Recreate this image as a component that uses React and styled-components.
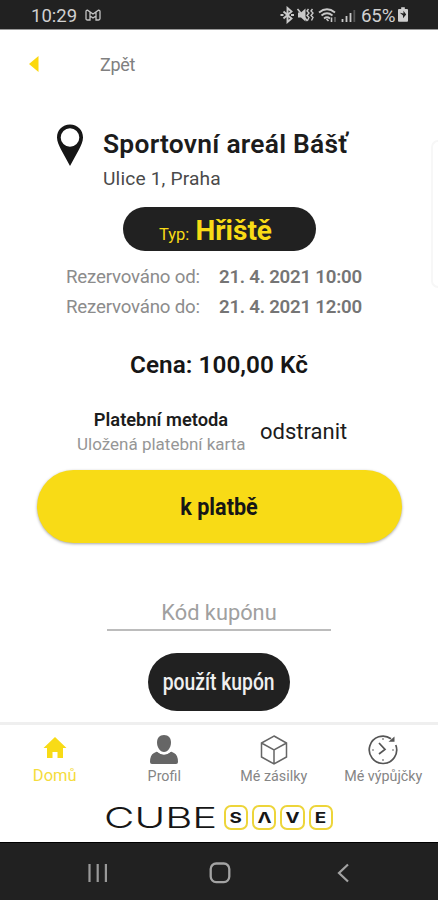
import React from 'react'
import styled, { createGlobalStyle } from 'styled-components'

function StatusIcons() {
  return (
    <svg width="76" height="18" viewBox="0 0 76 18" fill="none" stroke="#c9c9c9">
      <path d="M3.500 5.500l8 7-4 3.500V2l4 3.500-8 7" strokeWidth="1.900" />
      <path d="M0.500 9h3M11 9h3" strokeWidth="1.900" />
      <path d="M18 6.500h3l4.500-4v13l-4.500-4h-3z" fill="#c9c9c9" stroke="none" />
      <path d="M17.500 3l10 12" strokeWidth="1.600" />
      <path d="M28.500 3l-1.500 2 2 2-2 2.500 2 2-1.500 3M32.500 3l-1.500 2 2 2-2 2.500 2 2-1.500 3" strokeWidth="1.400" />
      <path d="M39 6.500q8-6.500 16 0M41.500 9.500q5.500-4.500 11 0M44 12.500q3-2.500 6 0" strokeWidth="1.800" />
      <path d="M46.500 13l2 2M51.500 11.500v4.500" strokeWidth="1.600" />
      <path d="M55 11v5" stroke="#777" strokeWidth="1.300" />
      <path d="M62.500 16v-3M66.500 16v-6M70.500 16V7" strokeWidth="1.800" />
      <path d="M74.300 16V4" stroke="#555" strokeWidth="1.800" />
    </svg>
  )
}

function StatusBar() {
  return (
    <StatusContainer>
      <Clock>10:29</Clock>
      <svg width="16" height="12" viewBox="0 0 16 12" fill="none" stroke="#c4c4c4" strokeWidth="1.3">
        <path d="M1 2.500Q1 1 2.500 1.200L8 5l5.500-3.800Q15 1 15 2.500v7q0 1.500-1.500 1.500H11V7L8 9 5 7v4H2.500Q1 11 1 9.500zM5 3v4M11 3v4" />
      </svg>
      <StatusRight>
        <StatusIcons />
        <Percent>65%</Percent>
        <svg width="10" height="15" viewBox="0 0 11 16">
          <path d="M3.500 0h4v2H10q1 0 1 1v12q0 1-1 1H1q-1 0-1-1V3q0-1 1-1h2.500z" fill="#cfcfcf" />
          <path d="M2 6l4 1V4l3 4-3.500 4V9z" fill="#212121" />
        </svg>
      </StatusRight>
    </StatusContainer>
  )
}

function Place() {
  return (
    <PlaceContainer>
      <svg width="28" height="43" viewBox="0 0 28 43">
        <path fillRule="evenodd" d="M14 0.500C6.500 0.500 1 6 1 13.500c0 4 2 8 4 12L14 42l9-16.500c2-4 4-8 4-12C27 6 21.500 0.500 14 0.500zm0 3.700a9.300 9.300 0 1 1 0 18.600A9.300 9.300 0 0 1 14 4.200z" fill="#161616" />
      </svg>
      <div>
        <PlaceName>Sportovní areál Bášť</PlaceName>
        <Address>Ulice 1, Praha</Address>
      </div>
    </PlaceContainer>
  )
}

function Reservation({ label, value }) {
  return (
    <ReservationRow>
      <ReservationLabel>{label}</ReservationLabel>
      <ReservationValue>{value}</ReservationValue>
    </ReservationRow>
  )
}

function HomeIcon() {
  return (
    <svg width="30" height="30" viewBox="0 0 30 30">
      <path d="M15 2L3.500 13H7v10h5.500v-6h5v6H23V13h3.500z" fill="#f8db16" />
    </svg>
  )
}

function ProfileIcon() {
  return (
    <svg width="30" height="30" viewBox="0 0 30 30" fill="#666">
      <path d="M15 0c4.500 0 7 3 7 7.500S19 17 15 17 8 12 8 7.500 10.500 0 15 0z" />
      <path d="M8 16.500q7 6 14 0l3 1.500q4 2 4 9 0 2-2 2H3q-2 0-2-2 0-7 4-9z" />
      <path d="M7.700 15.800q7.300 6 14.600 0" fill="none" stroke="#fff" strokeWidth="1.200" />
    </svg>
  )
}

function BoxIcon() {
  return (
    <svg width="30" height="30" viewBox="0 0 30 30" fill="none" stroke="#666" strokeWidth="1.500">
      <path d="M15 1l12.500 7v14L15 29 2.500 22V8zM2.500 8L15 15l12.500-7M15 15v14" />
    </svg>
  )
}

function HistoryIcon() {
  return (
    <svg width="30" height="30" viewBox="0 0 30 30" fill="none" stroke="#555" strokeWidth="1.700">
      <path d="M23 3.700A13.700 13.700 0 1 0 27.800 10" />
      <path d="M20.500 6.800h6V1.500z" fill="#555" stroke="none" />
      <path d="M11 8l6 6.500-6 4.500" strokeWidth="1.700" />
      <path d="M15 3v2M15 24v2M4 15h2M24 15h2" stroke="#999" />
    </svg>
  )
}

const tabs = [
  { name: 'Domů', icon: HomeIcon, active: true },
  { name: 'Profil', icon: ProfileIcon },
  { name: 'Mé zásilky', icon: BoxIcon },
  { name: 'Mé výpůjčky', icon: HistoryIcon },
]

function Tabs() {
  return (
    <TabsContainer>
      {tabs.map(({ name, icon: Icon, active }) => (
        <Tab key={name}>
          <Icon />
          <TabName $active={active}>{name}</TabName>
        </Tab>
      ))}
    </TabsContainer>
  )
}

function Logo() {
  return (
    <LogoContainer>
      <LogoName>CUBE</LogoName>
      <Tiles>
        {['S', 'Λ', 'V', 'E'].map((letter) => (
          <Tile key={letter}>
            <TileLetter>{letter}</TileLetter>
          </Tile>
        ))}
      </Tiles>
    </LogoContainer>
  )
}

function SystemBar() {
  return (
    <SystemContainer>
      <svg width="20" height="20" viewBox="0 0 20 20" stroke="#999" strokeWidth="2.200">
        <path d="M1.500 1v18M9.700 1v18M17.900 1v18" />
      </svg>
      <svg width="22" height="22" viewBox="0 0 22 22" fill="none" stroke="#a3a3a3" strokeWidth="2.300">
        <rect x="1.700" y="1.500" width="18.600" height="18.600" rx="5.500" />
      </svg>
      <svg width="12" height="20" viewBox="0 0 12 20" fill="none" stroke="#a3a3a3" strokeWidth="2.200">
        <path d="M11 1.500L2 10l9 8.500" />
      </svg>
    </SystemContainer>
  )
}

function App() {
  return (
    <Phone>
      <GlobalStyle />
      <StatusBar />
      <Header>
        <svg width="10" height="16" viewBox="0 0 10 16"><path d="M9.500 0v16L0 8z" fill="#fbd80e" /></svg>
        <Back>Zpět</Back>
      </Header>
      <Content>
        <Place />
        <TypePill>
          <TypeLabel>Typ:</TypeLabel>
          <TypeName>Hřiště</TypeName>
        </TypePill>
        <Reservations>
          <Reservation label="Rezervováno od:" value="21. 4. 2021 10:00" />
          <Reservation label="Rezervováno do:" value="21. 4. 2021 12:00" />
        </Reservations>
        <Price>Cena: 100,00 Kč</Price>
        <Payment>
          <Method>
            <MethodTitle>Platební metoda</MethodTitle>
            <MethodCard>Uložená platební karta</MethodCard>
          </Method>
          <Remove>odstranit</Remove>
        </Payment>
        <PayButton><PayText>k platbě</PayText></PayButton>
        <Coupon>Kód kupónu</Coupon>
        <CouponButton><CouponText>použít kupón</CouponText></CouponButton>
        <EdgePanel />
      </Content>
      <Tabs />
      <Logo />
      <SystemBar />
    </Phone>
  )
}

const GlobalStyle = createGlobalStyle`
  * {
    box-sizing: border-box;
  }
  body {
    margin: 0;
    background: #fff;
    font-family: Roboto, sans-serif;
  }
  svg {
    display: block;
    flex-shrink: 0;
  }
`;
const Phone = styled.div`
  width: 438px;
  height: 900px;
  display: flex;
  flex-direction: column;
  background: #fff;
  overflow: hidden;
  white-space: nowrap;
`;
const StatusContainer = styled.div`
  height: 30px;
  flex-shrink: 0;
  display: flex;
  align-items: center;
  padding: 0 30px 0 31px;
  background: #212121;
  border-bottom: 1px solid #999;
  color: #d0d0d0;
`;
const Clock = styled.span`
  width: 54px;
  font-size: 18.5px;
  line-height: 30px;
  padding-top: 2px;
`;
const StatusRight = styled.div`
  margin-left: auto;
  display: flex;
  align-items: center;
`;
const Percent = styled.span`
  width: 35px;
  margin: 2px 2px 0 5px;
  font-size: 18.8px;
  letter-spacing: -0.2px;
`;
const Header = styled.div`
  height: 70px;
  flex-shrink: 0;
  display: flex;
  align-items: center;
  padding: 0 0 2px 29px;
`;
const Back = styled.span`
  margin: 1px 0 0 61px;
  font-size: 18px;
  letter-spacing: -0.3px;
  color: #808080;
`;
const Content = styled.div`
  position: relative;
  height: 622px;
  flex-shrink: 0;
  display: flex;
  flex-direction: column;
`;
const PlaceContainer = styled.div`
  height: 107px;
  display: flex;
  padding: 24px 0 0 56px;
  gap: 19px;
`;
const PlaceName = styled.h1`
  margin: 4px 0 0;
  font-size: 26.4px;
  line-height: 32px;
  font-weight: 600;
  letter-spacing: 0.25px;
  color: #1c1c1c;
`;
const Address = styled.div`
  margin-top: 7px;
  font-size: 19.2px;
  line-height: 24px;
  letter-spacing: 0.15px;
  color: #4a4a4a;
`;
const TypePill = styled.div`
  width: 193px;
  height: 44px;
  margin-left: 123px;
  padding: 0 44px 0 36px;
  display: flex;
  align-items: baseline;
  justify-content: space-between;
  line-height: 48px;
  border-radius: 22px;
  background: #212121;
  color: #f8db16;
`;
const TypeLabel = styled.span`
  font-size: 16.5px;
`;
const TypeName = styled.span`
  font-size: 28px;
  font-weight: 700;
`;
const Reservations = styled.div`
  padding: 11px 0 0 66px;
`;
const ReservationRow = styled.div`
  height: 30px;
  display: flex;
  line-height: 30px;
  font-size: 18.7px;
`;
const ReservationLabel = styled.span`
  width: 153px;
  letter-spacing: -0.2px;
  color: #8c8c8c;
`;
const ReservationValue = styled.span`
  font-weight: 600;
  letter-spacing: -0.25px;
  color: #757575;
`;
const Price = styled.div`
  margin: 28px 0 0 130px;
  height: 30px;
  font-size: 24.3px;
  line-height: 30px;
  font-weight: 600;
  letter-spacing: 0.05px;
  color: #161616;
`;
const Payment = styled.div`
  height: 90px;
  display: flex;
  align-items: center;
  padding: 14px 0 0 77px;
`;
const Method = styled.div`
  width: 168px;
  text-align: center;
  line-height: 24px;
`;
const MethodTitle = styled.div`
  font-size: 18.3px;
  font-weight: 600;
  color: #1c1c1c;
`;
const MethodCard = styled.div`
  font-size: 17px;
  color: #969696;
`;
const Remove = styled.button`
  margin: 0 0 0 15px;
  padding: 0;
  border: 0;
  background: none;
  font: 400 22px/26px Roboto, sans-serif;
  color: #1c1c1c;
`;
const PayButton = styled.button`
  width: 365px;
  height: 73px;
  margin: 0 0 0 37px;
  padding: 0;
  border: 0;
  border-radius: 37px;
  background: #f8db16;
  box-shadow: 0 1px 3px rgba(0, 0, 0, 0.35);
`;
const PayText = styled.span`
  display: inline-block;
  font: 700 24px/30px Roboto, sans-serif;
  color: #161616;
  transform: scaleX(0.9);
`;
const Coupon = styled.div`
  width: 224px;
  height: 34px;
  margin: 54px 0 0 107px;
  border-bottom: 2px solid #bcbcbc;
  text-align: center;
  font-size: 21.8px;
  line-height: 31px;
  color: #a0a0a0;
`;
const CouponButton = styled.button`
  width: 142px;
  height: 58px;
  margin: 22px 0 0 148px;
  padding: 0;
  border: 0;
  border-radius: 29px;
  background: #212121;
`;
const CouponText = styled.span`
  display: inline-block;
  font: 500 23px/30px Roboto, sans-serif;
  color: #f0f0f0;
  transform: translateY(1px) scaleX(0.84);
`;
// handle of the system edge panel, cut off by the screen border
const EdgePanel = styled.div`
  position: absolute;
  right: 0;
  top: 40px;
  width: 7px;
  height: 148px;
  border: 2px solid #f7f7f7;
  border-right: 0;
  border-radius: 7px 0 0 7px;
`;
const TabsContainer = styled.nav`
  height: 72px;
  flex-shrink: 0;
  display: grid;
  grid-template-columns: repeat(4, 1fr);
  border-top: 3px solid #efefef;
`;
const Tab = styled.div`
  display: flex;
  flex-direction: column;
  align-items: center;
  padding-top: 10px;
`;
const TabName = styled.span`
  margin-top: 1px;
  line-height: 20px;
  font-size: ${({ $active }) => ($active ? '16.5px' : '14.3px')};
  color: ${({ $active }) => ($active ? '#f5dc3c' : '#858585')};
`;
const LogoContainer = styled.div`
  height: 48px;
  flex-shrink: 0;
  display: flex;
  align-items: center;
  padding: 0 0 2px 104px;
`;
const LogoName = styled.span`
  width: 120px;
  padding-top: 2px;
  font: 300 29px/36px Inter, sans-serif;
  color: #161616;
  transform: scaleX(1.44);
  transform-origin: left;
`;
const Tiles = styled.div`
  display: flex;
  gap: 4px;
`;
const Tile = styled.span`
  width: 24.2px;
  height: 25px;
  display: flex;
  align-items: center;
  justify-content: center;
  border: 2px solid #edd53a;
  border-radius: 7px;
`;
const TileLetter = styled.span`
  padding-top: 1px;
  font: 700 14.5px/20px Inter, sans-serif;
  color: #161616;
  transform: scaleX(1.3);
`;
const SystemContainer = styled.div`
  height: 58px;
  flex-shrink: 0;
  display: grid;
  grid-template-columns: 121px 128px 12px;
  align-items: center;
  padding: 2px 0 0 88px;
  border-top: 1px solid #000;
  background: #212121;
`;

export default App
